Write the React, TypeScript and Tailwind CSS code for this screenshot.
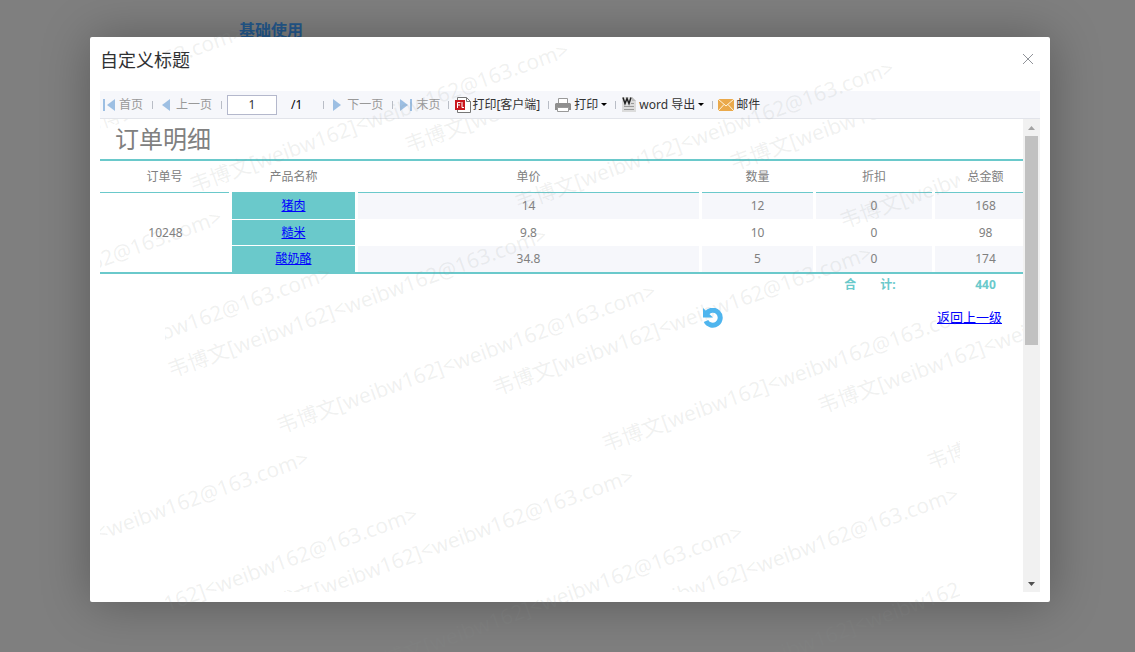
import type { ReactNode } from "react";

type Product = {
  name: string;
  price: string;
  quantity: string;
  discount: string;
  total: string;
};

const products: Product[] = [
  { name: "猪肉", price: "14", quantity: "12", discount: "0", total: "168" },
  { name: "糙米", price: "9.8", quantity: "10", discount: "0", total: "98" },
  { name: "酸奶酪", price: "34.8", quantity: "5", discount: "0", total: "174" },
];

const WATERMARK = "韦博文[weibw162]<weibw162@163.com>";

// bottom left corner of each watermark, relative to its layer
const pageMarks = [
  [-296, 177], [29, 195], [354, 213], [679, 231],
  [-209, 418], [116, 436], [441, 454], [766, 472],
  [-122, 659], [203, 677], [528, 695],
];
const reportMarks = [
  [-16, 18], [309, 36], [634, 54],
  [-253, 243], [72, 261], [397, 279], [722, 297],
  [-166, 484], [159, 502], [484, 520],
];

function Watermarks({ marks }: { marks: number[][] }) {
  return (
    <>
      {marks.map(([left, top]) => (
        <span
          key={`${left},${top}`}
          className="absolute origin-bottom-left -rotate-20 whitespace-nowrap text-[21px] leading-5 text-[#8a8f8d]/13"
          style={{ left, top: top - 20 }}
        >
          {WATERMARK}
        </span>
      ))}
    </>
  );
}

function Separator() {
  return <span className="h-2 w-px shrink-0 bg-[#b9bdc6]" />;
}

function Arrow({ flip, bar }: { flip?: boolean; bar?: boolean }) {
  return (
    <svg width={bar ? 12 : 8} height="12" viewBox={bar ? "0 0 12 12" : "4 0 8 12"} className={flip ? "rotate-180" : ""} fill="#9dbfe3">
      {bar && <path d="M0 0h2v12H0z" />}
      <path d="M12 0v12L4 6z" />
    </svg>
  );
}

function Caret() {
  return (
    <svg width="6" height="3" viewBox="0 0 6 3">
      <path d="M0 0h6L3 3z" fill="#000" />
    </svg>
  );
}

function ToolButton({ children, className = "" }: { children: ReactNode; className?: string }) {
  return <button className={`flex shrink-0 items-center whitespace-nowrap ${className}`}>{children}</button>;
}

function Toolbar() {
  return (
    <div className="flex h-7 shrink-0 items-center border-b border-[#e2e4ea] bg-[#f6f7fb] pl-[3px] text-[12px] text-[#333]">
      <ToolButton className="mr-[9px] gap-1 text-[#999]">
        <Arrow bar />首页
      </ToolButton>
      <Separator />
      <ToolButton className="mx-[9px] gap-[6px] text-[#999]">
        <Arrow />上一页
      </ToolButton>
      <Separator />
      <input
        aria-label="页码"
        defaultValue="1"
        className="ml-[5px] h-5 w-[50px] border border-[#b4b8cc] bg-white text-center text-[12px]"
      />
      <span className="mr-[21px] ml-[14px] text-black">/1</span>
      <Separator />
      <ToolButton className="mx-[9px] gap-[6px] text-[#999]">
        <Arrow flip />下一页
      </ToolButton>
      <Separator />
      <ToolButton className="mr-2 ml-[7px] gap-1 text-[#999]">
        <Arrow flip bar />末页
      </ToolButton>
      <Separator />
      <ToolButton className="mr-2 ml-[6px] gap-px">
        <svg width="16" height="16" viewBox="0 0 16 16">
          <path d="M2.5 .5h9l4 4v11h-13z" fill="#fff" stroke="#777" />
          <path d="M11.5 .5v4h4" fill="none" stroke="#777" />
          <path d="M0 3h10v10H0z" fill="#c9171e" />
          <path d="M2.500 11V5.500h3M2.500 8h2.500M7 5v5.500h2" fill="none" stroke="#fff" />
        </svg>
        打印[客户端]
      </ToolButton>
      <Separator />
      <ToolButton className="mr-2 ml-[6px] gap-[3px]">
        <svg width="16" height="14" viewBox="0 0 16 14">
          <path d="M3.5 .5h9v5h-9z" fill="#fff" stroke="#999" />
          <path d="M1 5h14l1 1v6H0V6z" fill="#8f8f8f" />
          <path d="M2.5 9.500h11v4h-11z" fill="#fff" stroke="#999" />
        </svg>
        打印
        <Caret />
      </ToolButton>
      <Separator />
      <ToolButton className="mr-2 ml-[6px] gap-[3px]">
        <svg width="14" height="15" viewBox="0 0 14 15">
          <path d="M0 0h10l4 4v11H0z" fill="#dcdcdc" />
          <path d="M10 0v4h4z" fill="#bbb" />
          <path d="M1 .5l2 6 2-5 2 5 2-6" fill="none" stroke="#222" strokeWidth="1.5" />
          <path d="M2 9.500h10M2 12.500h10M9 6.500h3" stroke="#999" />
        </svg>
        word 导出
        <Caret />
      </ToolButton>
      <Separator />
      <ToolButton className="ml-[5px] gap-[2px]">
        <svg width="16" height="12" viewBox="0 0 16 12">
          <path d="M0 0h16v12H0z" fill="#eaa94b" />
          <path d="M0 0l8 7 8-7M0 12l6-6.500M16 12l-6-6.500" fill="none" stroke="#fff5e0" />
        </svg>
        邮件
      </ToolButton>
    </div>
  );
}

function Report() {
  const head = "h-8 border-b border-[#6ac9cb] font-normal";
  const rowHeights = ["h-[26px]", "h-[27px]", "h-7"];
  const nameBorders = ["", "border-y border-white", "border-b-2 border-[#6ac9cb]"];

  return (
    <div className="min-w-0 flex-1">
      <h2 className="h-10 pl-[15px] text-[24px] leading-10 text-[#808080]">订单明细</h2>
      <table className="w-full table-fixed border-separate border-spacing-0 border-t-2 border-[#6ac9cb] text-center text-[12px] leading-4 text-[#808080]">
        <colgroup>
          <col className="w-[129px]" />
          <col className="w-[3px]" />
          <col className="w-[123px]" />
          <col className="w-[3px]" />
          <col />
          <col className="w-[3px]" />
          <col className="w-[111px]" />
          <col className="w-[3px]" />
          <col className="w-[116px]" />
          <col className="w-[3px]" />
          <col className="w-[88px]" />
        </colgroup>
        <thead>
          <tr>
            <th className={head}>订单号</th>
            <th />
            <th className={head}>产品名称</th>
            <th />
            <th className={head}>单价</th>
            <th />
            <th className={head}>数量</th>
            <th />
            <th className={head}>折扣</th>
            <th />
            <th className={`${head} pl-[13px]`}>总金额</th>
          </tr>
        </thead>
        <tbody>
          {products.map((product, idx) => {
            const edge = idx === products.length - 1 ? "border-b-2 border-[#6ac9cb]" : "";
            const cell = `${edge} ${idx % 2 === 0 ? "bg-[#f6f7fb]" : ""}`;
            return (
              <tr key={product.name} className={rowHeights[idx]}>
                {idx === 0 && (
                  <td rowSpan={3} className="border-b-2 border-[#6ac9cb] pl-[2px]">10248</td>
                )}
                <td className={edge} />
                <td className={`${nameBorders[idx]} bg-[#6ac9cb]`}>
                  <a href="#" className="text-[#0000ff] underline">{product.name}</a>
                </td>
                <td className={edge} />
                <td className={cell}>{product.price}</td>
                <td className={edge} />
                <td className={cell}>{product.quantity}</td>
                <td className={edge} />
                <td className={cell}>{product.discount}</td>
                <td className={edge} />
                <td className={`${cell} pl-[13px]`}>{product.total}</td>
              </tr>
            );
          })}
        </tbody>
        <tfoot>
          <tr className="h-[22px] font-bold text-[#6ac9cb]">
            <td colSpan={8} />
            <td className="pr-2 whitespace-pre">{"合\u3000\u3000计:"}</td>
            <td />
            <td className="pl-[13px]">440</td>
          </tr>
        </tfoot>
      </table>
      <div className="flex justify-end pt-[11px] pr-[21px]">
        <a href="#" className="text-[13px] leading-5 text-[#0000ff] underline">返回上一级</a>
      </div>
    </div>
  );
}

function Scrollbar() {
  return (
    <div className="flex w-[17px] shrink-0 flex-col items-center bg-[#f1f1f1]">
      <div className="flex h-[17px] items-center">
        <svg width="7" height="4" viewBox="0 0 7 4"><path d="M0 4h7L3.500 0z" fill="#a3a3a3" /></svg>
      </div>
      <div className="h-[209px] w-[13px] bg-[#c1c1c1]" />
      <div className="mt-auto flex h-[17px] items-center">
        <svg width="7" height="4" viewBox="0 0 7 4"><path d="M0 0h7L3.500 4z" fill="#505050" /></svg>
      </div>
    </div>
  );
}

export default function App() {
  return (
    <div className="relative flex h-screen flex-col overflow-hidden bg-[#7f7f7f] pt-[37px] pr-[85px] pb-[50px] pl-[90px] font-['Noto_Sans','Noto_Sans_CJK_SC',sans-serif]">
      <a href="#" className="absolute top-5 left-[239px] text-[16px] leading-5 font-bold text-[#24588c]">基础使用</a>

      <div role="dialog" aria-label="自定义标题" className="relative flex min-h-0 flex-1 flex-col rounded-[2px] bg-white px-[10px] pb-[10px] shadow-[1px_1px_50px_rgba(0,0,0,0.3)]">
        <div className="flex h-[54px] shrink-0 items-start justify-between pt-[11px]">
          <h1 className="text-[18px] leading-6 text-[#303133]">自定义标题</h1>
          <button aria-label="关闭" className="mt-[6px] mr-[7px]">
            <svg width="10" height="10" viewBox="0 0 10 10">
              <path d="M0 0l10 10M10 0L0 10" stroke="#909399" />
            </svg>
          </button>
        </div>
        <Toolbar />
        <div className="relative flex min-h-0 flex-1">
          <Report />
          <Scrollbar />
          <div className="pointer-events-none absolute inset-y-0 right-[17px] left-0 overflow-hidden">
            <Watermarks marks={reportMarks} />
          </div>
          <svg width="20" height="20" viewBox="0 0 20 20" className="absolute top-[189px] left-[603px]">
            <path d="M3.5 5.500A7.500 7.500 0 1 1 3 13" fill="none" stroke="#4fb5ee" strokeWidth="5" />
            <path d="M0 0l10 9.500H0z" fill="#4fb5ee" />
          </svg>
        </div>
      </div>

      <div className="pointer-events-none absolute inset-y-0 right-[175px] left-[165px] overflow-hidden">
        <Watermarks marks={pageMarks} />
      </div>
    </div>
  );
}
